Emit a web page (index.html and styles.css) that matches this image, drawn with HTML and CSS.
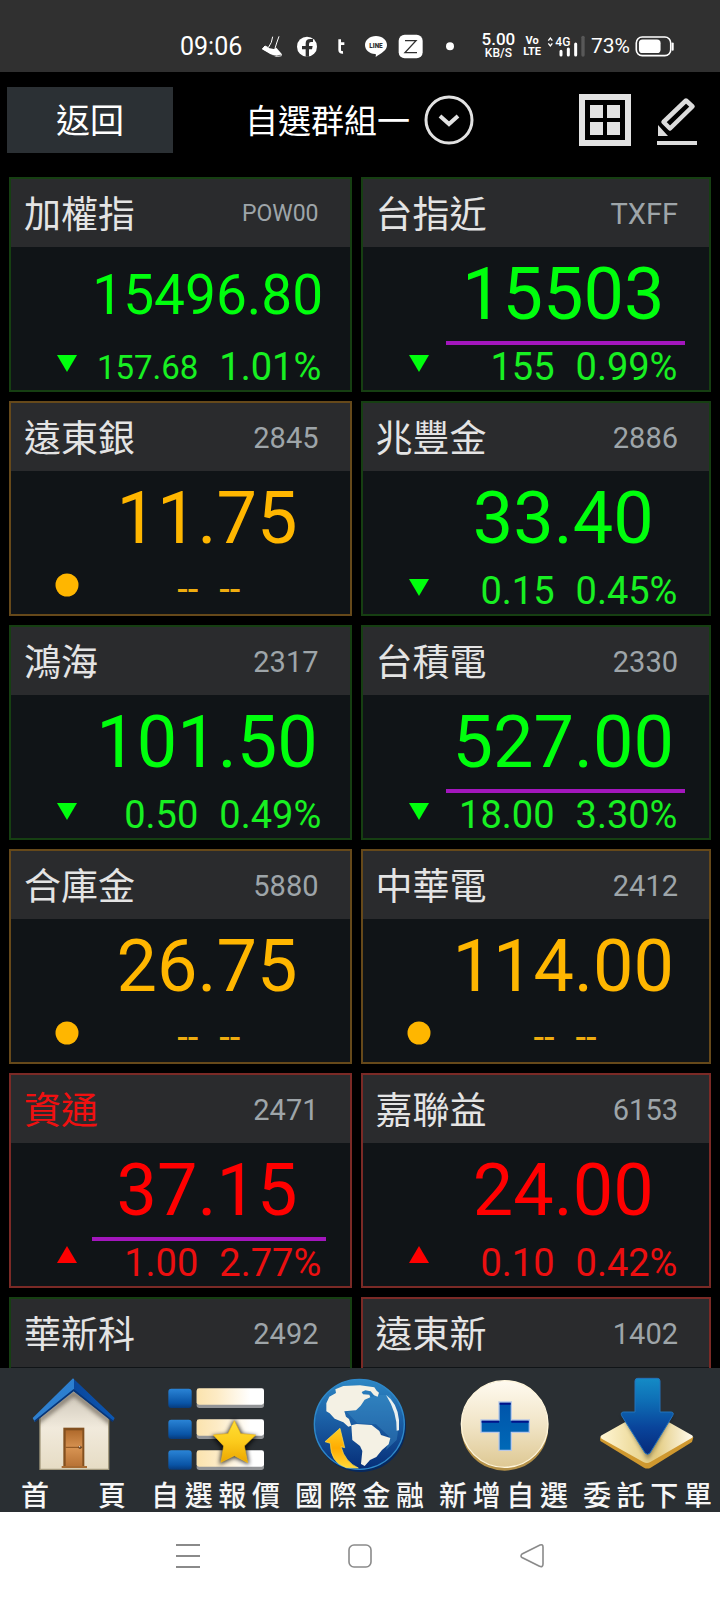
FILE: index.html
```html
<!DOCTYPE html>
<html lang="zh-Hant">
<head>
<meta charset="utf-8">
<meta name="viewport" content="width=device-width, initial-scale=1">
<title>自選群組一</title>
<link rel="stylesheet" href="styles.css">
</head>
<body>
<div class="status-bar">
  <div class="status-left">
    <span class="clock">09:06</span>
    <svg class="status-icon" viewBox="285 26 105 105"><path d="M307 86L315 77L325 82L334 66L338 49M357 48L350 68L345 84" fill="none" stroke="#fff" stroke-width="3"/><path d="M306 87L315 77L326 83L341 86L349 82L366 102L364 108L349 110L330 101Z" fill="#fff"/><path d="M309 91L332 104L350 107L364 104" stroke="#303030" stroke-width="2" fill="none"/></svg>
    <svg class="status-icon" viewBox="390 26 105 105"><circle cx="441" cy="79" r="30" fill="#fff"/><path d="M437 109V87H426V77H437V69Q437 56 451 56H459V65H453Q447 65 447 71V77H458L456 87H447V109Z" fill="#303030"/></svg>
    <svg class="status-icon" viewBox="495 26 105 105"><path d="M539 57V89Q539 97 549 96M539 70H553" fill="none" stroke="#fff" stroke-width="8"/></svg>
    <svg class="status-icon" viewBox="600 26 105 105"><path d="M648 47C667 47 681 59 681 74C681 91 664 98 647 110C647 105 650 102 645 101C628 100 615 89 615 74C615 59 629 47 648 47Z" fill="#fff"/><text x="648" y="83" class="line-word">LINE</text></svg>
    <svg class="status-icon" viewBox="705 26 105 105"><rect x="716" y="43" width="72" height="71" rx="18" fill="#fff"/><path d="M735 61H768L735 97H771" fill="none" stroke="#303030" stroke-width="4"/></svg>
    <svg class="status-icon" viewBox="0 0 105 105"><circle cx="60" cy="52" r="12" fill="#fff"/></svg>
  </div>
  <div class="status-right">
    <div class="speed"><span class="speed-value">5.00</span><span class="speed-unit">KB/S</span></div>
    <div class="volte"><span>Vo</span><span>LTE</span></div>
    <svg class="signal" viewBox="354 26 120 105"><path d="M361 61L367 53L373 61M361 69L367 77L373 69" fill="none" stroke="#fff" stroke-width="4"/><text x="382" y="77" class="network">4G</text><path d="M399 93V104M421 86V104M443 71V104" stroke="#fff" stroke-width="9" stroke-linecap="round"/><path d="M465 51V104" stroke="#585858" stroke-width="10" stroke-linecap="round"/></svg>
    <span class="charge">73%</span>
    <svg class="battery" viewBox="0 0 120 64"><rect x="3" y="3" width="105" height="57" rx="18" fill="none" stroke="#fff" stroke-width="5"/><rect x="11" y="11" width="66" height="41" rx="11" fill="#fff"/><path d="M114 23V42" stroke="#fff" stroke-width="6" stroke-linecap="round"/></svg>
  </div>
</div>

<header class="toolbar">
  <button class="back" type="button">返回</button>
  <button class="group-picker" type="button"><span>自選群組一</span>
    <svg width="50" height="50" viewBox="0 0 50 50" fill="none" stroke="#e2e2e2" stroke-width="3"><circle cx="25" cy="25" r="23"/><path d="M16 21L25 29L34 21" stroke-width="4"/></svg>
  </button>
  <div class="tools">
    <button class="tool" type="button" aria-label="版面">
      <svg width="52" height="52" viewBox="0 0 52 52" fill="#e2e2e2"><path d="M0 0H52V52H0ZM6 6V46H46V6Z" fill-rule="evenodd"/><path d="M11 11H24V24H11ZM28 11H41V24H28ZM11 28H24V41H11ZM28 28H41V41H28Z"/></svg>
    </button>
    <button class="tool" type="button" aria-label="編輯">
      <svg width="40" height="52" viewBox="0 0 40 52"><path d="M6.500 28L29 6.500L35.500 12.500L13 34.500Z" fill="none" stroke="#dcdcdc" stroke-width="4.500" stroke-linejoin="round"/><path d="M1 31V42H11ZM0 47H40V51H0Z" fill="#dcdcdc"/></svg>
    </button>
  </div>
</header>

<svg class="defs" width="0" height="0" aria-hidden="true">
  <symbol id="down" viewBox="0 0 24 34"><path d="M2 10H22L12 27Z"/></symbol>
  <symbol id="up" viewBox="0 0 24 34"><path d="M12 5L2 22H22Z"/></symbol>
  <symbol id="flat" viewBox="0 0 24 34"><circle cx="12" cy="16" r="11.5"/></symbol>
</svg>

<main class="quotes">
  <article class="card fall">
    <div class="card-head"><h2>加權指</h2><span class="code code-small">POW00</span></div>
    <p class="price price-small">15496.80</p>
    <div class="change"><div class="diff diff-small"><svg class="marker"><use href="#down"/></svg><span>157.68</span></div><span>1.01%</span></div>
  </article>
  <article class="card fall">
    <div class="card-head"><h2>台指近</h2><span class="code">TXFF</span></div>
    <p class="price traded">15503</p>
    <div class="change"><div class="diff"><svg class="marker"><use href="#down"/></svg><span>155</span></div><span>0.99%</span></div>
  </article>
  <article class="card even">
    <div class="card-head"><h2>遠東銀</h2><span class="code">2845</span></div>
    <p class="price">11.75</p>
    <div class="change"><div class="diff"><svg class="marker"><use href="#flat"/></svg><span>--</span></div><span>--</span></div>
  </article>
  <article class="card fall">
    <div class="card-head"><h2>兆豐金</h2><span class="code">2886</span></div>
    <p class="price">33.40</p>
    <div class="change"><div class="diff"><svg class="marker"><use href="#down"/></svg><span>0.15</span></div><span>0.45%</span></div>
  </article>
  <article class="card fall">
    <div class="card-head"><h2>鴻海</h2><span class="code">2317</span></div>
    <p class="price">101.50</p>
    <div class="change"><div class="diff"><svg class="marker"><use href="#down"/></svg><span>0.50</span></div><span>0.49%</span></div>
  </article>
  <article class="card fall">
    <div class="card-head"><h2>台積電</h2><span class="code">2330</span></div>
    <p class="price traded">527.00</p>
    <div class="change"><div class="diff"><svg class="marker"><use href="#down"/></svg><span>18.00</span></div><span>3.30%</span></div>
  </article>
  <article class="card even">
    <div class="card-head"><h2>合庫金</h2><span class="code">5880</span></div>
    <p class="price">26.75</p>
    <div class="change"><div class="diff"><svg class="marker"><use href="#flat"/></svg><span>--</span></div><span>--</span></div>
  </article>
  <article class="card even">
    <div class="card-head"><h2>中華電</h2><span class="code">2412</span></div>
    <p class="price">114.00</p>
    <div class="change"><div class="diff"><svg class="marker"><use href="#flat"/></svg><span>--</span></div><span>--</span></div>
  </article>
  <article class="card rise">
    <div class="card-head"><h2 class="alert">資通</h2><span class="code">2471</span></div>
    <p class="price traded">37.15</p>
    <div class="change"><div class="diff"><svg class="marker"><use href="#up"/></svg><span>1.00</span></div><span>2.77%</span></div>
  </article>
  <article class="card rise">
    <div class="card-head"><h2>嘉聯益</h2><span class="code">6153</span></div>
    <p class="price">24.00</p>
    <div class="change"><div class="diff"><svg class="marker"><use href="#up"/></svg><span>0.10</span></div><span>0.42%</span></div>
  </article>
  <article class="card fall">
    <div class="card-head"><h2>華新科</h2><span class="code">2492</span></div>
  </article>
  <article class="card rise">
    <div class="card-head"><h2>遠東新</h2><span class="code">1402</span></div>
  </article>
</main>

<nav class="tabs">
  <a class="tab tab-home" href="#home">
    <svg class="tab-icon" viewBox="66 48 300 288">
      <defs>
        <linearGradient id="wall" x2="0" y2="1"><stop offset=".1" stop-color="#cfc8bb"/><stop offset=".5" stop-color="#f1eadc"/><stop offset="1" stop-color="#e6dcc4"/></linearGradient>
        <linearGradient id="door" x2="0" y2="1"><stop stop-color="#b06a2c"/><stop offset=".5" stop-color="#d79352"/><stop offset="1" stop-color="#b87336"/></linearGradient>
        <linearGradient id="roof"><stop stop-color="#2f80cf"/><stop offset=".5" stop-color="#2c7fd0"/><stop offset=".51" stop-color="#0a479c"/><stop offset="1" stop-color="#0c58b4"/></linearGradient>
        <filter id="soft" x="-30%" y="-30%" width="160%" height="160%"><feGaussianBlur stdDeviation="6"/></filter>
        <clipPath id="wall-clip"><path d="M114 328V172L215 80L320 172V328Z"/></clipPath>
      </defs>
      <path d="M114 328V172L215 80L320 172V328Z" fill="url(#wall)" stroke="#a59b7f" stroke-width="4"/>
      <path d="M100 190L215 100L330 190" fill="none" stroke="#51493e" stroke-opacity=".65" stroke-width="14" filter="url(#soft)" clip-path="url(#wall-clip)"/>
      <path d="M92 174L213 55L338 174L333 184L215 94L98 185Z" fill="url(#roof)"/>
      <path d="M98 184L215 90L333 184" fill="none" stroke="#083577" stroke-width="5"/>
      <path d="M184 203H247V321H184Z" fill="#83501f"/><path d="M191 211H241V318H191Z" fill="url(#door)"/><path d="M191 262H241" stroke="#87501e" stroke-width="3"/><circle cx="234" cy="262" r="5" fill="#6e4522"/><circle cx="233" cy="260" r="2" fill="#eee"/><path d="M179 318H255V324H179Z" fill="#a86b31"/>
    </svg>
    <span class="tab-label">首頁</span>
  </a>
  <a class="tab" href="#watchlist">
    <svg class="tab-icon" viewBox="498 48 300 288">
      <defs>
        <linearGradient id="blue" x2="0" y2="1"><stop stop-color="#2a84d6"/><stop offset=".75" stop-color="#0954a6"/><stop offset="1" stop-color="#073a7b"/></linearGradient>
        <linearGradient id="bar"><stop stop-color="#fbe3ae"/><stop offset=".3" stop-color="#fdebc5"/><stop offset=".8" stop-color="#fff"/><stop offset="1" stop-color="#fff"/></linearGradient>
        <linearGradient id="star" x2="0" y2="1"><stop stop-color="#ffdf35"/><stop offset=".5" stop-color="#fccb1c"/><stop offset="1" stop-color="#eba600"/></linearGradient>
      </defs>
      <g fill="url(#blue)"><rect x="505" y="86" width="70" height="58" rx="9"/><rect x="505" y="179" width="70" height="58" rx="9"/><rect x="505" y="271" width="70" height="58" rx="9"/></g>
      <g fill="#929497"><rect x="590" y="87" width="202" height="57" rx="8"/><rect x="590" y="180" width="202" height="57" rx="8"/><rect x="590" y="273" width="202" height="57" rx="8"/></g>
      <g><rect x="590" y="85" width="202" height="49" rx="7" fill="url(#bar)"/><rect x="590" y="178" width="202" height="49" rx="7" fill="url(#bar)"/><rect x="590" y="271" width="202" height="49" rx="7" fill="url(#bar)"/></g>
      <path d="M703 176L728 222L772 227L740 263L748 314L703 293L658 314L665 263L634 227L680 222Z" filter="url(#soft)" opacity=".75"/>
      <path d="M703 182L722 221L767 225L733 258L743 308L703 287L663 307L671 258L640 225L684 221Z" fill="url(#star)" stroke="#f5bd16" stroke-width="2" stroke-linejoin="round"/>
    </svg>
    <span class="tab-label">自選報價</span>
  </a>
  <a class="tab" href="#global">
    <svg class="tab-icon" viewBox="90 48 300 288">
      <defs>
        <linearGradient id="sea" x2="0" y2="1"><stop stop-color="#2d87c4"/><stop offset=".45" stop-color="#1b5fa5"/><stop offset="1" stop-color="#062e78"/></linearGradient>
        <linearGradient id="gold" x2="0" y2="1"><stop stop-color="#ffcf24"/><stop offset=".5" stop-color="#ffac00"/><stop offset="1" stop-color="#ffd83a"/></linearGradient>
      </defs>
      <circle cx="242" cy="200" r="136" fill="#06285e"/>
      <circle cx="238" cy="193" r="135" fill="url(#sea)" stroke="#2e88c9" stroke-width="4"/>
      <path d="M200 155L232 190L288 193L328 230L318 270L350 240Q365 170 330 105L294 105L250 118L225 152Z" fill="#3f91c8" opacity=".4"/>
      <path d="M139 130L148 110L168 99L166 88L190 78L240 76L283 82L290 92L297 98L293 110L282 106L272 94L256 91L245 96L249 103L268 104L271 112L254 119L242 137L228 151L193 154L198 170L207 177L214 197L205 200L190 187L164 176L149 160L139 154Z" fill="#f4f1e4"/>
      <path d="M214 196L230 192L275 195L298 213L303 225L331 234L326 253L306 270L289 291L270 300L254 318L243 312L247 273L240 258L217 240Z" fill="#f4f1e4"/>
      <path d="M318 105Q352 128 357 180V211L350 212Q352 159 318 105Z" fill="#eaf0ef"/>
      <path d="M180 205L135 245L151 250Q151 308 199 323L235 324Q195 306 183 260L194 263Z" fill="url(#gold)" stroke="#ffe253" stroke-width="2"/>
    </svg>
    <span class="tab-label">國際金融</span>
  </a>
  <a class="tab" href="#add">
    <svg class="tab-icon" viewBox="522 48 300 288">
      <defs>
        <linearGradient id="cream" x2="0" y2="1"><stop stop-color="#fffaf0"/><stop offset=".5" stop-color="#f1e5c7"/><stop offset="1" stop-color="#dec893"/></linearGradient>
        <linearGradient id="plus" x2="0" y2="1"><stop stop-color="#0054aa"/><stop offset="1" stop-color="#0069b7"/></linearGradient>
      </defs>
      <circle cx="674" cy="201" r="131" fill="#b5924a"/>
      <circle cx="674" cy="192" r="130" fill="url(#cream)" stroke="#fff6dc" stroke-width="4"/>
      <path d="M657 126H694V180H748V217H694V271H657V217H603V180H657Z" fill="url(#plus)" stroke="#b8c8e6" stroke-width="4"/>
      <path d="M659 128H692V134H659ZM605 182H657V188H605ZM694 182H746V188H694Z" fill="#00128a"/>
    </svg>
    <span class="tab-label">新增自選</span>
  </a>
  <a class="tab" href="#order">
    <svg class="tab-icon" viewBox="114 48 300 288">
      <defs>
        <linearGradient id="arrow" x2="0" y2="1"><stop stop-color="#148bc6"/><stop offset=".3" stop-color="#0e6eb5"/><stop offset=".65" stop-color="#09449b"/><stop offset="1" stop-color="#062a7a"/></linearGradient>
        <linearGradient id="plate"><stop stop-color="#fff6d5"/><stop offset=".35" stop-color="#eedc9f"/><stop offset=".6" stop-color="#e3cb80"/><stop offset="1" stop-color="#fffbee"/></linearGradient>
      </defs>
      <path d="M120 233L121 243L252 323Q262 328 272 323L396 246L400 232L262 160Z" fill="#cf982f"/>
      <path d="M125 226L248 157Q261 150 274 157L396 226Q402 230 394 235L271 306Q261 312 250 306L125 236Q118 231 125 226Z" fill="url(#plate)"/>
      <path d="M186 166L264 300L338 166Z" filter="url(#soft)" opacity=".4"/>
      <path d="M233 55H292Q300 55 300 63V156H334Q343 157 338 167L270 279Q263 287 255 279L185 167Q181 157 190 156H225V63Q225 55 233 55Z" fill="url(#arrow)" stroke="#2372bb" stroke-width="3"/>
    </svg>
    <span class="tab-label">委託下單</span>
  </a>
</nav>

<div class="system-nav">
  <button type="button" aria-label="最近使用"><svg width="24" height="26" viewBox="0 0 24 26" stroke="#8a8a8a" stroke-width="2"><path d="M0 2H24M0 13H24M0 24H24"/></svg></button>
  <button type="button" aria-label="主畫面"><svg width="24" height="26" viewBox="0 0 24 26" fill="none" stroke="#8a8a8a" stroke-width="1.6"><rect x="1" y="2" width="22" height="22" rx="5"/></svg></button>
  <button type="button" aria-label="上一頁"><svg width="24" height="26" viewBox="0 0 24 26" fill="none" stroke="#8a8a8a" stroke-width="1.6"><path d="M2 11L20 2Q23 1 23 4V21Q23 25 19 23L2 14.500Q0 13 2 11Z"/></svg></button>
</div>
</body>
</html>
```

FILE: styles.css
```css
* {
  box-sizing: border-box;
}

body {
  margin: 0;
  height: 100vh;
  display: flex;
  flex-direction: column;
  background: #000;
  color: #fff;
  font-family: Roboto, "Noto Sans CJK TC", sans-serif;
}

svg {
  display: block;
  flex: none;
}

button {
  margin: 0;
  padding: 0;
  border: 0;
  background: none;
  color: inherit;
  font: inherit;
}

.defs {
  position: absolute;
}

/* Status bar */
.status-bar {
  flex: none;
  display: flex;
  justify-content: space-between;
  align-items: center;
  height: 72px;
  padding: 20px 45px 0 180px;
  background: #303030;
}

.status-left,
.status-right {
  display: flex;
  align-items: center;
}

.clock {
  width: 75px;
  font-size: 25px;
}

.status-icon {
  width: 35px;
  height: 35px;
}

.line-word {
  font-size: 19px;
  font-weight: 900;
  text-anchor: middle;
  fill: #303030;
}

.status-right {
  gap: 5px;
}

.speed,
.volte {
  display: flex;
  flex-direction: column;
  align-items: center;
  font-weight: 500;
}

.speed {
  padding-right: 3px;
}

.speed-value {
  font-size: 17px;
  line-height: 14px;
}

.speed-unit {
  font-size: 12px;
  line-height: 14px;
}

.volte {
  font-size: 11px;
  font-weight: 700;
  line-height: 11px;
}

.signal {
  width: 40px;
  height: 35px;
}

.network {
  font-size: 36px;
  font-weight: 500;
  fill: #fff;
}

.charge {
  font-size: 21px;
}

.battery {
  width: 40px;
  height: 21px;
}

/* Toolbar */
.toolbar {
  flex: none;
  display: flex;
  align-items: center;
  padding: 15px 23px 24px 7px;
}

.back {
  width: 166px;
  height: 66px;
  padding-bottom: 3px;
  background: #2b3034;
  font-size: 34px;
}

.group-picker {
  display: flex;
  align-items: center;
  gap: 14px;
  margin-left: 72px;
  font-size: 33px;
}

.group-picker span {
  padding-bottom: 3px;
}

.tools {
  display: flex;
  gap: 26px;
  margin-left: auto;
}

/* Quote cards */
.quotes {
  flex: 1;
  min-height: 0;
  overflow: hidden;
  display: grid;
  grid-template-columns: 343fr 351fr;
  grid-auto-rows: min-content;
  align-content: start;
  gap: 9px;
  padding: 0 9px;
}

.card {
  min-height: 215px;
  border: 2px solid var(--edge);
  background: #101417;
  color: var(--trend);
}

.fall {
  --edge: #163f12;
  --trend: #00ff0d;
  --detail: #18f022;
}

.rise {
  --edge: #7b2a26;
  --trend: #ff0000;
  --detail: #ec0f10;
}

.even {
  --edge: #66491a;
  --trend: #ffb600;
  --detail: #efac0f;
}

.card-head {
  display: flex;
  justify-content: space-between;
  align-items: center;
  height: 68px;
  padding: 0 31px 0 13px;
  background: #2a2b2d;
}

.card-head h2 {
  margin: 0;
  padding-top: 5px;
  color: #e4e4e4;
  font-size: 37px;
  font-weight: 400;
  line-height: 48px;
}

.card-head .alert {
  color: #f01010;
}

.code {
  padding-top: 1px;
  color: #9ea5a9;
  font-size: 29px;
}

.code-small {
  font-size: 23px;
}

.price {
  margin: 0 7% 0 24%;
  padding: 2px 4px 0 0;
  border-bottom: 4px solid transparent;
  font-size: 72px;
  line-height: 92px;
  text-align: center;
  white-space: nowrap;
}

.price-small {
  font-size: 55px;
}

.traded {
  border-color: #a316bd;
}

.change {
  display: grid;
  grid-template-columns: 59fr 41fr;
  column-gap: 21px;
  color: var(--detail);
  font-size: 38px;
  line-height: 45px;
}

.even .change {
  line-height: 41px;
}

.diff {
  display: flex;
  justify-content: space-between;
  padding-left: 44px;
}

.diff-small {
  font-size: 33px;
}

.marker {
  width: 24px;
  height: 34px;
  fill: var(--trend);
}

/* Bottom tabs */
.tabs {
  flex: none;
  display: grid;
  grid-template-columns: repeat(5, 1fr);
  background: #2a2f33;
}

.tab {
  display: flex;
  flex-direction: column;
  align-items: center;
  gap: 10px;
  padding: 8px 8px 0 7px;
  color: #f6f6f6;
  text-decoration: none;
}

.tab-home {
  padding: 8px 18px 0 21px;
}

.tab-icon {
  width: 100px;
  height: 96px;
}

.tab-label {
  width: 100%;
  font-size: 28px;
  font-weight: 500;
  line-height: 30px;
  text-align: justify;
  text-align-last: justify;
}

/* System navigation */
.system-nav {
  flex: none;
  display: flex;
  justify-content: space-between;
  align-items: center;
  height: 88px;
  padding: 0 176px;
  background: #fff;
}
```
